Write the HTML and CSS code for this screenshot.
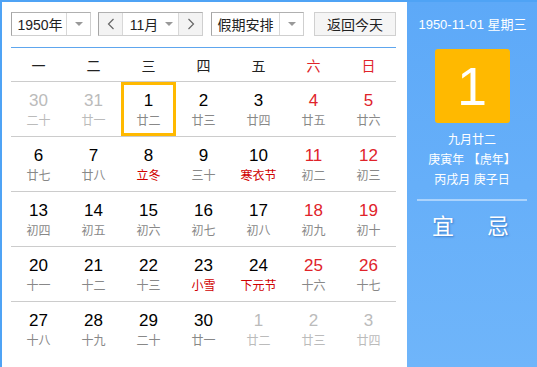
FILE: index.html
```html
<!DOCTYPE html>
<html>
<head>
<meta charset="utf-8">
<link rel="stylesheet" href="styles.css">
</head>
<body>
<div class="cal">
  <div class="main">
    <div class="toolbar">
      <div class="sel year">
        <span class="sel-text">1950年</span>
        <span class="sel-arrow"><i class="tri"></i></span>
      </div>
      <div class="month-group">
        <span class="nav"><svg width="8" height="12" viewBox="0 0 8 12"><polyline points="6.5,1 1.5,6 6.5,11" fill="none" stroke="#666" stroke-width="1.2"/></svg></span>
        <span class="month"><span class="month-text">11月</span><i class="tri"></i></span>
        <span class="nav next"><svg width="8" height="12" viewBox="0 0 8 12"><polyline points="1.5,1 6.5,6 1.5,11" fill="none" stroke="#666" stroke-width="1.2"/></svg></span>
      </div>
      <div class="sel holiday">
        <span class="sel-text">假期安排</span>
        <span class="sel-arrow"><i class="tri"></i></span>
      </div>
      <div class="today-btn">返回今天</div>
    </div>
    <div class="grid">
      <div class="weekdays">
        <span>一</span><span>二</span><span>三</span><span>四</span><span>五</span><span class="red">六</span><span class="red">日</span>
      </div>
      <div class="week">
        <div class="day other"><b>30</b><small>二十</small></div>
        <div class="day other"><b>31</b><small>廿一</small></div>
        <div class="day selected"><b>1</b><small>廿二</small></div>
        <div class="day"><b>2</b><small>廿三</small></div>
        <div class="day"><b>3</b><small>廿四</small></div>
        <div class="day wk"><b>4</b><small>廿五</small></div>
        <div class="day wk"><b>5</b><small>廿六</small></div>
      </div>
      <div class="week">
        <div class="day"><b>6</b><small>廿七</small></div>
        <div class="day"><b>7</b><small>廿八</small></div>
        <div class="day"><b>8</b><small class="fest">立冬</small></div>
        <div class="day"><b>9</b><small>三十</small></div>
        <div class="day"><b>10</b><small class="fest">寒衣节</small></div>
        <div class="day wk"><b>11</b><small>初二</small></div>
        <div class="day wk"><b>12</b><small>初三</small></div>
      </div>
      <div class="week">
        <div class="day"><b>13</b><small>初四</small></div>
        <div class="day"><b>14</b><small>初五</small></div>
        <div class="day"><b>15</b><small>初六</small></div>
        <div class="day"><b>16</b><small>初七</small></div>
        <div class="day"><b>17</b><small>初八</small></div>
        <div class="day wk"><b>18</b><small>初九</small></div>
        <div class="day wk"><b>19</b><small>初十</small></div>
      </div>
      <div class="week">
        <div class="day"><b>20</b><small>十一</small></div>
        <div class="day"><b>21</b><small>十二</small></div>
        <div class="day"><b>22</b><small>十三</small></div>
        <div class="day"><b>23</b><small class="fest">小雪</small></div>
        <div class="day"><b>24</b><small class="fest">下元节</small></div>
        <div class="day wk"><b>25</b><small>十六</small></div>
        <div class="day wk"><b>26</b><small>十七</small></div>
      </div>
      <div class="week last">
        <div class="day"><b>27</b><small>十八</small></div>
        <div class="day"><b>28</b><small>十九</small></div>
        <div class="day"><b>29</b><small>二十</small></div>
        <div class="day"><b>30</b><small>廿一</small></div>
        <div class="day other"><b>1</b><small>廿二</small></div>
        <div class="day other"><b>2</b><small>廿三</small></div>
        <div class="day other"><b>3</b><small>廿四</small></div>
      </div>
    </div>
  </div>
  <div class="panel">
    <div class="p-date">1950-11-01 星期三</div>
    <div class="p-big">1</div>
    <div class="p-line p-first">九月廿二</div>
    <div class="p-line">庚寅年 【虎年】</div>
    <div class="p-line">丙戌月 庚子日</div>
    <div class="p-sep"></div>
    <div class="p-yiji"><span>宜</span><span>忌</span></div>
  </div>
</div>
</body>
</html>
```
FILE: styles.css
```css
* { box-sizing: border-box; }
html, body { margin: 0; padding: 0; background: #fff; }
body { font-family: "Liberation Sans", "Noto Sans CJK SC", sans-serif; }

.cal {
  width: 537px;
  height: 367px;
  display: flex;
  border-left: 2px solid #4fa3f5;
  border-top: 2px solid #4fa3f5;
  overflow: hidden;
}

.main {
  width: 405px;
  padding: 10px 0 0 9px;
}

.toolbar {
  display: flex;
  height: 24px;
  align-items: stretch;
}

.sel, .month-group {
  display: flex;
  border: 1px solid #cfcfcf;
  border-left-color: #a5a5a5;
  border-top-color: #b0b0b0;
  background: #fff;
  font-size: 14px;
  color: #222;
}

.sel-text {
  flex: 1;
  display: flex;
  align-items: center;
  justify-content: center;
}

.sel-arrow {
  width: 24px;
  border-left: 1px solid #d8d8d8;
  display: flex;
  align-items: center;
  justify-content: center;
}

.tri {
  display: block;
  width: 0;
  height: 0;
  border-left: 4px solid transparent;
  border-right: 4px solid transparent;
  border-top: 4px solid #999;
}

.year { width: 80px; }
.year .sel-text { padding-left: 2px; }

.month-group { width: 105px; margin-left: 7px; }
.nav {
  width: 23px;
  background: #f3f3f3;
  display: flex;
  align-items: center;
  justify-content: center;
}
.month {
  flex: 1;
  border-left: 1px solid #d8d8d8;
  border-right: 1px solid #d8d8d8;
  display: flex;
  align-items: center;
  justify-content: center;
  gap: 7px;
  padding-left: 2px;
}

.holiday { width: 93px; margin-left: 8px; font-size: 14px; }

.today-btn {
  width: 82px;
  margin-left: 10px;
  border: 1px solid #d0d0d0;
  background: #f5f5f5;
  font-size: 14px;
  color: #222;
  display: flex;
  align-items: center;
  justify-content: center;
}

.grid {
  width: 385px;
  margin-top: 11px;
  border-top: 1px solid #5ea6ee;
}

.weekdays {
  display: grid;
  grid-template-columns: repeat(7, 55px);
  height: 34px;
  border-bottom: 1px solid #cccccc;
  align-items: center;
  font-size: 14px;
  color: #222;
  text-align: center;
  padding-top: 1px;
}
.weekdays .red { color: #e0232a; }

.week {
  display: grid;
  grid-template-columns: repeat(7, 55px);
  height: 55px;
  border-bottom: 1px solid #cccccc;
}
.week.last { border-bottom: none; }

.day {
  display: flex;
  flex-direction: column;
  align-items: center;
  padding-top: 9px;
}
.day b {
  font-weight: normal;
  font-size: 17px;
  line-height: 20px;
  color: #000;
}
.day small {
  font-size: 12px;
  line-height: 16px;
  color: #888;
  margin-top: 2px;
}
.day.wk b { color: #e0232a; }
.day small.fest { color: #d00000; }
.day.other b, .day.other small { color: #bbbbbb; }
.day.selected {
  border: 3px solid #ffb900;
  padding-top: 6px;
  height: 54px;
}
.day.selected small { margin-top: 2px; }

.panel {
  width: 130px;
  background: linear-gradient(#5da9f8, #6fb5fa);
  color: #fff;
  display: flex;
  flex-direction: column;
  align-items: center;
  padding-top: 13px;
}

.p-date {
  font-size: 13px;
  line-height: 20px;
  padding-left: 1px;
}

.p-big {
  width: 75px;
  height: 74px;
  margin-top: 14px;
  background: #ffb900;
  border-radius: 3px;
  font-size: 54px;
  line-height: 74px;
  text-align: center;
  color: #fff;
}

.p-line {
  font-size: 12px;
  line-height: 20px;
}
.p-first { margin-top: 7px; }

.p-sep {
  width: 110px;
  height: 2px;
  margin-top: 9px;
  background: rgba(255, 255, 255, 0.45);
}

.p-yiji {
  margin-top: 11px;
  display: flex;
  gap: 33px;
  font-size: 22px;
  line-height: 30px;
  font-weight: normal;
  text-shadow: 1px 1px 2px rgba(0, 60, 140, 0.45);
  padding-right: 3px;
}
```
